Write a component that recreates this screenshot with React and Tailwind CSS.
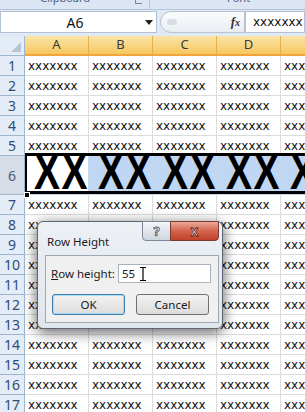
import React from "react";

const cols = ["A", "B", "C", "D", "E"];
const topRows = [1, 2, 3, 4, 5];
const bottomRows = [7, 8, 9, 10, 11, 12, 13, 14, 15, 16, 17];

const cellFont = { fontFamily: "'DejaVu Sans', sans-serif" };
const uiFont = { fontFamily: "'Noto Sans', 'Liberation Sans', sans-serif" };

const RowHead = ({ n, selected }) => (
  <div
    className={
      "w-[25px] shrink-0 flex items-center justify-center border-r border-b border-[#9eb6ce] text-[14px] " +
      (selected ? "bg-[#d6dde6] text-[#4a5a70]" : "bg-[#e4ecf7] text-[#2f4d76]")
    }
    style={uiFont}
  >
    {n}
  </div>
);

const DataRow = ({ n }) => (
  <div className="flex h-[20px]">
    <RowHead n={n} />
    {cols.map((c) => (
      <div
        key={c}
        className="w-[64px] shrink-0 border-r border-b border-[#dadcdd] pl-[3px] pt-[2px] text-[12px] leading-[16px] text-[#111] overflow-hidden whitespace-nowrap"
        style={cellFont}
      >
        xxxxxxx
      </div>
    ))}
  </div>
);

const App = () => {
  return (
    <div className="relative w-[305px] h-[412px] overflow-hidden bg-white">
      {/* ribbon group labels, cut off */}
      <div className="h-[10px] flex bg-[#dbe5f3] border-b border-[#b4c4d9] overflow-hidden text-[11px] text-[#4e6282]" style={uiFont}>
        <div className="w-[150px] relative border-r border-[#b4c4d9]">
          <span className="absolute left-[40px] -top-[10px]">Clipboard</span>
          <span className="absolute left-[135px] top-0 w-[7px] h-[4px] border-l border-b border-[#7a8aa3]" />
        </div>
        <div className="flex-1 relative">
          <span className="absolute left-[77px] -top-[10px]">Font</span>
        </div>
      </div>

      {/* formula bar */}
      <div className="h-[26px] flex bg-[#e1e9f4] pt-[1px]">
        <div className="w-[157px] h-[22px] bg-white border border-[#b2c2d6] flex items-center">
          <span className="flex-1 text-center text-[14px] text-[#111] pl-[4px]" style={uiFont}>
            A6
          </span>
          <svg width="8" height="5" viewBox="0 0 8 5" className="mr-[3px]">
            <path d="M0 0h8L4 5z" fill="#222" />
          </svg>
        </div>
        <div className="ml-[3px] w-[85px] h-[22px] flex items-center rounded-l-[11px] border border-[#b8c3d1] bg-gradient-to-b from-[#fbfcfd] to-[#e9edf2]">
          <span className="ml-[6px] w-[10px] h-[6px] rounded-full bg-[#d8dde4]" />
          <span className="ml-auto mr-[4px] text-[13px] font-bold italic text-[#333]" style={{ fontFamily: "'Liberation Serif', serif" }}>
            f<span className="text-[10px]">x</span>
          </span>
        </div>
        <div className="flex-1 h-[22px] bg-white border border-[#b2c2d6] flex items-center pl-[7px] text-[12px] text-[#111] whitespace-nowrap overflow-hidden" style={cellFont}>
          xxxxxxx
        </div>
      </div>

      {/* column headers */}
      <div className="flex h-[20px]">
        <div className="w-[25px] shrink-0 relative bg-[#e4ecf7] border-r border-b border-[#9eb6ce]">
          <svg width="10" height="10" viewBox="0 0 10 10" className="absolute right-[3px] bottom-[3px]">
            <path d="M10 0V10H0z" fill="#b7c4d4" />
          </svg>
        </div>
        {cols.map((c) => (
          <div
            key={c}
            className="w-[64px] shrink-0 flex items-center justify-center bg-gradient-to-b from-[#fbe4a6] to-[#f6c75e] border-r border-[#e0b050] border-b-2 border-b-[#f2a43a] text-[13px] text-[#3a3a3a]"
            style={uiFont}
          >
            {c}
          </div>
        ))}
      </div>

      {topRows.map((n) => (
        <DataRow key={n} n={n} />
      ))}

      {/* row 6, 55 high, whole row selected */}
      <div className="relative flex h-[39px]">
        <RowHead n={6} selected />
        {cols.map((c, i) => (
          <div
            key={c}
            className={
              "w-[64px] shrink-0 border-r border-b border-[#c9d8ea] overflow-hidden whitespace-nowrap flex items-end pl-[9px] " +
              (i === 0 ? "bg-white" : "bg-[#bfd7f4]")
            }
          >
            <span
              className="inline-block origin-bottom scale-y-[1.3] text-[39px] leading-[39px] font-bold tracking-[1.5px] text-black translate-y-[3px]"
              style={{ fontFamily: "'Liberation Sans', Arial, sans-serif" }}
            >
              XXXXXXX
            </span>
          </div>
        ))}
        <div className="absolute left-[25px] right-0 -top-[3px] h-[41px] border-t-[3px] border-b-[3px] border-l-[2px] border-black pointer-events-none" />
        <div className="absolute left-[24px] top-[36px] w-[6px] h-[6px] bg-black border border-white" />
      </div>

      {bottomRows.map((n) => (
        <DataRow key={n} n={n} />
      ))}

      {/* Row Height dialog */}
      <div
        className="absolute left-[37px] top-[221px] w-[186px] h-[108px] rounded-[6px] border border-[#5f6672] bg-gradient-to-b from-[#edf1f6] to-[#dfe6ee] shadow-[0_3px_14px_rgba(0,0,0,0.65)]"
        style={uiFont}
      >
        <div className="absolute left-[9px] top-[11px] text-[11.5px] text-[#1a1a1a]">Row Height</div>
        <div className="absolute left-[104px] top-[-1px] w-[29px] h-[20px] rounded-bl-[4px] border border-[#7f8896] bg-gradient-to-b from-[#f3f5f8] to-[#cfd6df] flex items-center justify-center">
          <span className="text-[13px] font-bold text-white leading-none [-webkit-text-stroke:0.8px_#4d5560]">?</span>
        </div>
        <div className="absolute left-[132px] top-[-1px] w-[49px] h-[20px] rounded-br-[4px] border border-[#7d3a30] bg-gradient-to-b from-[#e9a898] via-[#d4634d] to-[#c0402a] flex items-center justify-center">
          <span className="text-[14px] font-bold text-white leading-none [-webkit-text-stroke:0.8px_#5a2018]" style={{ fontFamily: "'Liberation Sans', sans-serif" }}>
            x
          </span>
        </div>

        <div className="absolute left-[7px] top-[33px] w-[174px] h-[68px] bg-[#f0f0f0] border border-[#a0a8b3] text-[11.5px] text-[#1a1a1a]">
          <div className="flex items-center mt-[8px] ml-[5px]">
            <span className="w-[67px] whitespace-nowrap">
              <span className="underline">R</span>ow height:
            </span>
            <div className="w-[93px] h-[19px] bg-white border border-[#aab2bd] flex items-center pl-[3px]">
              55
              <svg width="6" height="14" viewBox="0 0 6 14" className="ml-[5px]">
                <path d="M0 0.5h6M0 13.5h6M3 0.5v13" stroke="#000" strokeWidth="1.2" fill="none" />
              </svg>
            </div>
          </div>
          <div className="flex mt-[11px] ml-[6px] gap-[11px]">
            <div className="w-[73px] h-[21px] rounded-[3px] border border-[#3d7bad] bg-gradient-to-b from-[#f2f2f2] to-[#dcdcdc] shadow-[inset_0_0_0_1px_#a9dcf6] flex items-center justify-center">
              OK
            </div>
            <div className="w-[73px] h-[21px] rounded-[3px] border border-[#707070] bg-gradient-to-b from-[#f2f2f2] to-[#dcdcdc] flex items-center justify-center">
              Cancel
            </div>
          </div>
        </div>
      </div>
    </div>
  );
};

export default App;
